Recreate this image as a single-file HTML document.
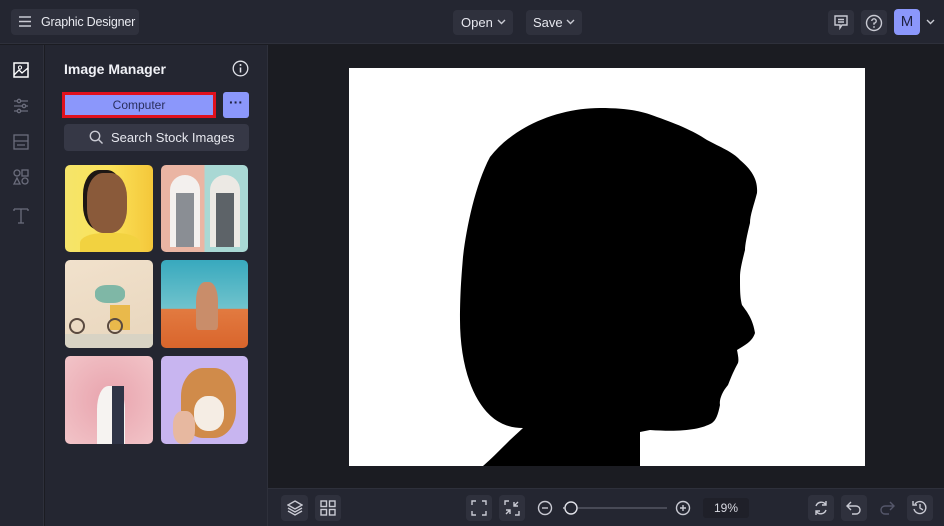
<!DOCTYPE html><html><head><style>
*{box-sizing:border-box;margin:0;padding:0}
body{width:944px;height:526px;overflow:hidden;background:#1b1c22;font-family:"Liberation Sans",sans-serif;position:relative;color:#e6e7ee}
.a{position:absolute}
.btn{position:absolute;background:#2f313d;border-radius:4px}
svg{display:block}
.ic{stroke:#c9cad3;fill:none;stroke-width:1.4}
</style></head><body>
<div class="a" style="left:0;top:0;width:944px;height:44px;background:#242631;border-bottom:1px solid #2e303b"></div>
<div class="btn" style="left:11px;top:9px;width:128px;height:26px"></div>
<svg class="a" style="left:18px;top:15px" width="14" height="13"><path d="M1 2H13M1 6.5H13M1 11H13" class="ic"/></svg>
<div class="a" style="left:41px;top:15px;font-size:12.5px;color:#e9eaf0;letter-spacing:-0.2px">Graphic Designer</div>
<div class="btn" style="left:453px;top:10px;width:60px;height:25px"></div>
<div class="a" style="left:461px;top:15px;font-size:13px">Open</div>
<svg class="a" style="left:497px;top:19px" width="9" height="6"><path d="M1 1L4.5 4.5L8 1" class="ic"/></svg>
<div class="btn" style="left:526px;top:10px;width:56px;height:25px"></div>
<div class="a" style="left:533px;top:15px;font-size:13px">Save</div>
<svg class="a" style="left:566px;top:19px" width="9" height="6"><path d="M1 1L4.5 4.5L8 1" class="ic"/></svg>
<div class="btn" style="left:828px;top:10px;width:26px;height:25px"></div>
<svg class="a" style="left:834px;top:15px" width="14" height="15"><path d="M1 1H13V10H8L6 13V10H1Z M4 4.5H10M4 7H10" class="ic"/></svg>
<div class="btn" style="left:861px;top:10px;width:26px;height:25px"></div>
<svg class="a" style="left:865px;top:14px" width="18" height="18"><circle cx="9" cy="9" r="7.5" class="ic"/><path d="M6.8 7A2.2 2.2 0 1 1 9 9.2V10.8" class="ic"/><circle cx="9" cy="13" r=".9" fill="#c9cad3"/></svg>
<div class="a" style="left:894px;top:9px;width:26px;height:26px;background:#8b97fb;border-radius:4px;color:#1e2140;font-size:15px;text-align:center;line-height:26px">M</div>
<svg class="a" style="left:926px;top:19px" width="9" height="6"><path d="M1 1L4.5 4.5L8 1" class="ic"/></svg>

<div class="a" style="left:0;top:45px;width:44px;height:481px;background:#242631;border-right:1px solid #2e303b"></div>
<svg class="a" style="left:12px;top:61px" width="20" height="170">
<rect x="2" y="2" width="14" height="14" stroke="#fff" fill="none" stroke-width="1.5"/><path d="M2 14L7 9L10 12L16 7" stroke="#fff" fill="none" stroke-width="1.3"/><circle cx="8" cy="6.5" r="1.6" stroke="#fff" fill="none"/>
<g stroke="#6b6d7c" fill="none" stroke-width="1.3"><path d="M2 40H16M2 45H16M2 50H16"/><circle cx="7" cy="40" r="1.7" fill="#242631"/><circle cx="12" cy="45" r="1.7" fill="#242631"/><circle cx="7" cy="50" r="1.7" fill="#242631"/>
<rect x="2" y="74" width="14" height="14"/><path d="M2 80H16M5 84H13"/>
<circle cx="5" cy="112" r="3"/><rect x="10" y="109" width="6" height="6"/><path d="M5 117L8 123H2Z"/><circle cx="13" cy="120" r="3"/>
<path d="M2 148H16M9 148V162M6 162H12M2 148V150M16 148V150"/></g></svg>

<div class="a" style="left:45px;top:45px;width:223px;height:481px;background:#242631;border-right:1px solid #2e303b"></div>
<div class="a" style="left:64px;top:61px;font-size:14px;font-weight:bold;color:#f0f1f6">Image Manager</div>
<svg class="a" style="left:232px;top:60px" width="17" height="17"><circle cx="8.5" cy="8.5" r="7.3" stroke="#e0e1e8" fill="none" stroke-width="1.3"/><path d="M8.5 7.5V12.5" stroke="#e0e1e8" stroke-width="1.5"/><circle cx="8.5" cy="5" r="1" fill="#e0e1e8"/></svg>
<div class="a" style="left:62px;top:92px;width:154px;height:26px;background:#8b97fb;border:3px solid #e0111d;font-size:12px;color:#2a2f5e;text-align:center;line-height:20px">Computer</div>
<div class="a" style="left:223px;top:92px;width:26px;height:26px;background:#8b97fb;border-radius:3px;color:#1e2140;text-align:center;font-weight:bold;line-height:20px;font-size:14px">···</div>
<div class="btn" style="left:64px;top:124px;width:185px;height:27px;background:#363846"></div>
<svg class="a" style="left:89px;top:130px" width="15" height="15"><circle cx="6" cy="6" r="4.7" class="ic" stroke="#e0e1e8"/><path d="M9.5 9.5L13.5 13.5" class="ic" stroke="#e0e1e8"/></svg>
<div class="a" style="left:111px;top:130px;font-size:13px;color:#e6e7ee">Search Stock Images</div>

<div class="a" style="left:65px;top:165px;width:88px;height:87px;border-radius:5px;background:linear-gradient(90deg,#f5e46a,#fbe35a 50%,#f4c73a);overflow:hidden"><div class="a" style="left:22px;top:8px;width:40px;height:60px;border-radius:40%;background:#8a5a3a;box-shadow:-4px -3px 0 #1e1714"></div><div class="a" style="left:15px;top:68px;width:60px;height:25px;background:#f2d240;border-radius:40% 40% 0 0"></div></div>
<div class="a" style="left:161px;top:165px;width:87px;height:87px;border-radius:5px;background:linear-gradient(90deg,#eab5a3 50%,#a9d8d4 50%);overflow:hidden"><div class="a" style="left:9px;top:10px;width:30px;height:72px;border-radius:15px 15px 0 0;background:#f3f0ee"></div><div class="a" style="left:15px;top:28px;width:18px;height:54px;background:#8a8e94"></div><div class="a" style="left:49px;top:10px;width:30px;height:72px;border-radius:15px 15px 0 0;background:#ece9e4"></div><div class="a" style="left:55px;top:28px;width:18px;height:54px;background:#5d6368"></div></div>
<div class="a" style="left:65px;top:260px;width:88px;height:88px;border-radius:5px;background:linear-gradient(160deg,#f1e1cc,#e8d6bd);overflow:hidden"><div class="a" style="left:30px;top:25px;width:30px;height:18px;background:#7fb7a6;border-radius:40%"></div><div class="a" style="left:45px;top:45px;width:20px;height:25px;background:#e9b94b"></div><div class="a" style="left:0;top:74px;width:88px;height:14px;background:#d8d3c4"></div><div class="a" style="left:4px;top:58px;width:16px;height:16px;border:2px solid #5a4a40;border-radius:50%"></div><div class="a" style="left:42px;top:58px;width:16px;height:16px;border:2px solid #5a4a40;border-radius:50%"></div></div>
<div class="a" style="left:161px;top:260px;width:87px;height:88px;border-radius:5px;background:linear-gradient(180deg,#38a9be,#70c3cc 55%,#e27a40 56%,#d9652c);overflow:hidden"><div class="a" style="left:35px;top:22px;width:22px;height:48px;background:#c98d6a;border-radius:40% 40% 10% 10%"></div></div>
<div class="a" style="left:65px;top:356px;width:88px;height:88px;border-radius:5px;background:radial-gradient(#e8a3ad,#f2c4c8);overflow:hidden"><div class="a" style="left:32px;top:30px;width:28px;height:58px;background:#f6f3f1;border-radius:40% 40% 0 0"></div><div class="a" style="left:47px;top:30px;width:12px;height:58px;background:#2f3446"></div></div>
<div class="a" style="left:161px;top:356px;width:87px;height:88px;border-radius:5px;background:#c8b5f0;overflow:hidden"><div class="a" style="left:20px;top:12px;width:55px;height:70px;background:#d08b4a;border-radius:40%"></div><div class="a" style="left:33px;top:40px;width:30px;height:35px;background:#f5ede4;border-radius:45%"></div><div class="a" style="left:12px;top:55px;width:22px;height:33px;background:#e7b8a0;border-radius:40%"></div></div>

<div class="a" style="left:349px;top:68px;width:516px;height:398px;background:#fff;overflow:hidden">
<svg width="516" height="398"><path transform="translate(-349,-68)" fill="#000" d="M600 108C630 108 645 112 657 117C680 125 695 132 707 140C720 147 733 152 740 160C752 170 758 180 757 193C754 205 750 215 750 223C747 235 745 245 745 250C742 262 740 270 740 277C740 290 740 297 742 305C748 313 753 320 755 333C752 342 745 345 737 350C738 355 739 360 738 363C733 372 730 380 728 385C722 392 719 400 720 405C718 415 716 420 712 423C700 430 680 432 650 430L640 432V466H483C490 460 500 450 510 440L523 428C505 428 490 420 478 400C466 380 460 350 460 320C460 290 462 270 463 257C466 230 475 185 490 157C515 125 560 108 600 108Z"/></svg></div>

<div class="a" style="left:268px;top:488px;width:676px;height:38px;background:#242631;border-top:1px solid #2e303b"></div>
<div class="btn" style="left:281px;top:495px;width:27px;height:26px"></div>
<svg class="a" style="left:287px;top:500px" width="16" height="16"><path d="M8 1L15 5L8 9L1 5Z M1 8L8 12L15 8 M1 11L8 15L15 11" class="ic"/></svg>
<div class="btn" style="left:315px;top:495px;width:26px;height:26px"></div>
<svg class="a" style="left:320px;top:500px" width="16" height="16"><rect x="1" y="1" width="5.5" height="5.5" class="ic"/><rect x="9.5" y="1" width="5.5" height="5.5" class="ic"/><rect x="1" y="9.5" width="5.5" height="5.5" class="ic"/><rect x="9.5" y="9.5" width="5.5" height="5.5" class="ic"/></svg>
<div class="btn" style="left:466px;top:495px;width:26px;height:26px"></div>
<svg class="a" style="left:471px;top:500px" width="16" height="16"><path d="M1 5V1H5M11 1H15V5M15 11V15H11M5 15H1V11" class="ic"/></svg>
<div class="btn" style="left:499px;top:495px;width:26px;height:26px"></div>
<svg class="a" style="left:504px;top:500px" width="16" height="16"><path d="M1 5V1H5M15 11V15H11M10 2V6H14M10 6L14 2M6 14V10H2M6 10L2 14" class="ic"/></svg>
<svg class="a" style="left:537px;top:500px" width="140" height="16"><circle cx="8" cy="8" r="6.5" class="ic"/><path d="M5 8H11" class="ic"/><path d="M40 8H130" stroke="#6b6d7c"/><circle cx="34" cy="8" r="6" stroke="#e0e1e8" fill="#242631" stroke-width="1.4"/><path d="M26 8H28" class="ic"/></svg>
<svg class="a" style="left:675px;top:500px" width="16" height="16"><circle cx="8" cy="8" r="6.5" class="ic"/><path d="M5 8H11M8 5V11" class="ic"/></svg>
<div class="a" style="left:703px;top:498px;width:46px;height:20px;background:#1f2029;border-radius:3px;font-size:12px;text-align:center;line-height:20px;color:#d9dae2">19%</div>
<div class="btn" style="left:808px;top:495px;width:26px;height:26px"></div>
<svg class="a" style="left:813px;top:500px" width="16" height="16"><path d="M3 6A5.5 5.5 0 0 1 13 5M13 10A5.5 5.5 0 0 1 3 11M13 1V5H9M3 15V11H7" class="ic"/></svg>
<div class="btn" style="left:841px;top:495px;width:26px;height:26px"></div>
<svg class="a" style="left:846px;top:500px" width="16" height="16"><path d="M5 2L1 6L5 10M1 6H10A4 4 0 0 1 10 14H6" class="ic"/></svg>
<svg class="a" style="left:879px;top:500px" width="16" height="16"><path d="M11 2L15 6L11 10M15 6H6A4 4 0 0 0 6 14H10" stroke="#55576a" fill="none" stroke-width="1.4"/></svg>
<div class="btn" style="left:907px;top:495px;width:26px;height:26px"></div>
<svg class="a" style="left:912px;top:500px" width="16" height="16"><path d="M3 4A6 6 0 1 1 2 9M1 1V5H5M8 4V8L11 10" class="ic"/></svg>
</body></html>
